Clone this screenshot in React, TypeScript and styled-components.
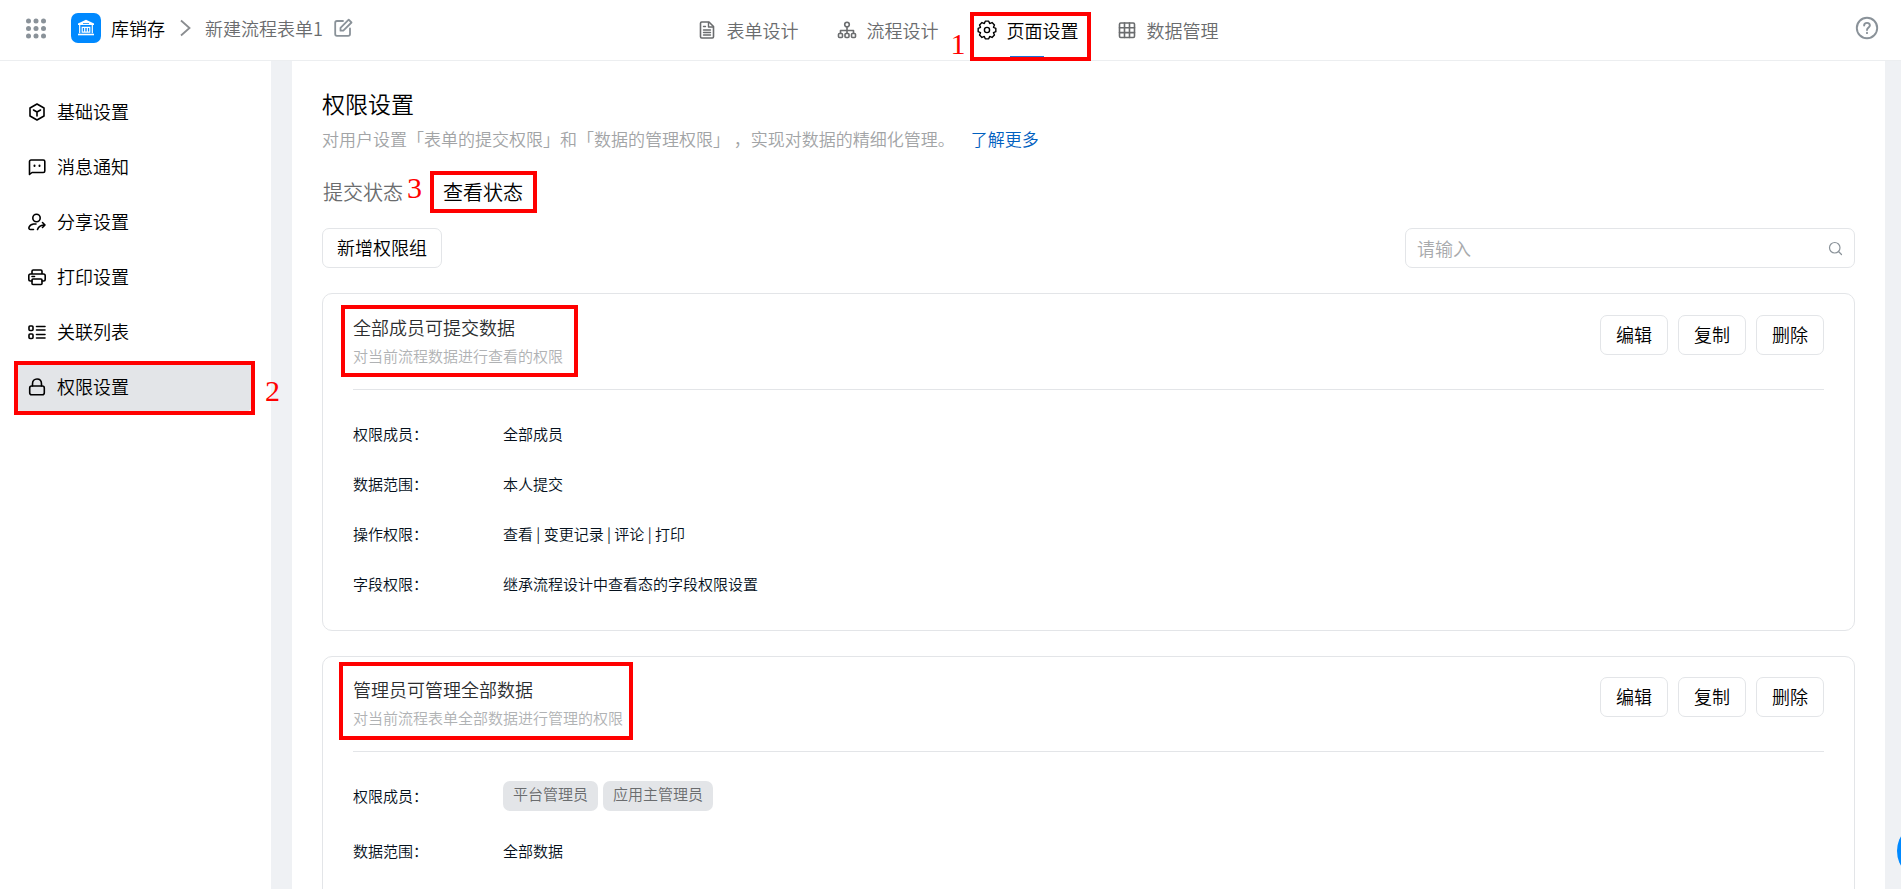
import React from "react";
import styled, { createGlobalStyle } from "styled-components";

const GlobalStyle = createGlobalStyle`
  *, *::before, *::after { box-sizing: border-box; }
  body {
    margin: 0;
    color: #000;
    background: #eff1f4;
    font-family: "Noto Sans CJK SC", "Liberation Sans", sans-serif;
    font-size: 18px;
    font-weight: 350;
    line-height: 24px;
    overflow: hidden;
  }
  button, input { font: inherit; color: inherit; }
  h1, h2, p, dl, dd, dt, ul { margin: 0; padding: 0; font-weight: inherit; }
`;

const Page = styled.div`
  display: flex;
  flex-direction: column;
  height: 100vh;
`;

const Header = styled.header`
  display: flex;
  align-items: center;
  flex: none;
  height: 61px;
  padding: 0 12px 0 26px;
  background: #fff;
  border-bottom: 1px solid #eceef0;
`;

const HeaderSide = styled.div<{ $end?: boolean }>`
  display: flex;
  flex: 1;
  align-items: center;
  justify-content: ${(p) => (p.$end ? "flex-end" : "flex-start")};
  padding-right: ${(p) => (p.$end ? "10px" : "18px")};
  padding-bottom: 4px;
`;

const IconButton = styled.button`
  display: flex;
  padding: 0;
  border: 0;
  background: none;
  color: #8a9299;
  cursor: pointer;
`;

const AppLogo = styled.span`
  display: flex;
  align-items: center;
  justify-content: center;
  width: 30px;
  height: 30px;
  margin: 0 10px 0 25px;
  border-radius: 7px;
  background: #0089ff;
`;

const CrumbArrow = styled.svg`
  margin: 0 14px;
`;

const FormName = styled.span`
  margin-right: 10px;
  color: #6a6c6e;
`;

const Nav = styled.nav`
  display: flex;
  height: 60px;
`;

const NavTab = styled.a<{ $active?: boolean }>`
  position: relative;
  display: flex;
  align-items: center;
  gap: 10px;
  width: 140px;
  padding: 0 0 0 15px;
  color: ${(p) => (p.$active ? "#000" : "#6a6c6e")};
  text-decoration: none;
`;

const NavLine = styled.span`
  position: absolute;
  left: 48px;
  bottom: 2px;
  width: 34px;
  height: 2px;
  background: #1a73d8;
`;

const Body = styled.div`
  display: flex;
  flex: 1;
  gap: 21px;
  min-height: 0;
  padding-right: 16px;
`;

const Sidebar = styled.nav`
  display: flex;
  flex: none;
  flex-direction: column;
  gap: 5px;
  width: 271px;
  padding: 26px 19px 0 16px;
  background: #fff;
`;

const SideItem = styled.a<{ $active?: boolean }>`
  position: relative;
  display: flex;
  align-items: center;
  gap: 10px;
  height: 50px;
  padding-left: 11px;
  border-radius: 7px;
  background: ${(p) => (p.$active ? "#e3e5e8" : "transparent")};
  color: inherit;
  text-decoration: none;
`;

const SideLabel = styled.span`
  padding-bottom: 2px;
`;

const Main = styled.main`
  flex: 1;
  min-width: 0;
  padding: 26px 30px 0;
  overflow: hidden;
  background: #fff;
`;

const Title = styled.h1`
  font-size: 23px;
  line-height: 32px;
`;

const Intro = styled.p`
  margin-top: 8px;
  color: #a2a4a6;
  font-size: 17px;
`;

const MoreLink = styled.a`
  margin-left: 16px;
  color: #0060c0;
  text-decoration: none;
`;

const Tabs = styled.div`
  display: flex;
  gap: 40px;
  margin-top: 27px;
  padding-left: 1px;
`;

const Tab = styled.button<{ $active?: boolean }>`
  position: relative;
  padding: 0;
  border: 0;
  background: none;
  color: ${(p) => (p.$active ? "#000" : "#6a6c6e")};
  font-size: 20px;
  line-height: 28px;
  cursor: pointer;
`;

const Toolbar = styled.div`
  display: flex;
  justify-content: space-between;
  margin-top: 22px;
`;

const Button = styled.button`
  min-width: 68px;
  height: 40px;
  padding: 0 14px 2px;
  border: 1px solid #e3e5e8;
  border-radius: 7px;
  background: #fff;
  cursor: pointer;
`;

const SearchBox = styled.label`
  display: flex;
  align-items: center;
  width: 450px;
  height: 40px;
  padding: 0 11px;
  border: 1px solid #e3e5e8;
  border-radius: 7px;
`;

const SearchInput = styled.input`
  flex: 1;
  min-width: 0;
  padding: 0;
  border: 0;
  outline: 0;
  background: none;
  &::placeholder { color: #a8aaac; opacity: 1; }
`;

const Card = styled.section<{ $open?: boolean }>`
  margin-top: 25px;
  padding: 0 30px ${(p) => (p.$open ? "120px" : "21px")};
  border: 1px solid #e3e5e8;
  border-radius: 10px;
`;

const CardHead = styled.div<{ $open?: boolean }>`
  display: flex;
  align-items: flex-start;
  justify-content: space-between;
  height: ${(p) => (p.$open ? "95px" : "96px")};
  padding-top: ${(p) => (p.$open ? "20px" : "21px")};
  border-bottom: 1px solid #e3e5e8;
`;

const CardHeading = styled.div`
  position: relative;
`;

const CardTitle = styled.h2`
  color: #2c2e30;
  font-size: 18px;
`;

const CardNote = styled.p`
  margin-top: 6px;
  color: #b0b2b4;
  font-size: 15px;
  line-height: 22px;
`;

const Actions = styled.div`
  display: flex;
  gap: 10px;
`;

const Details = styled.dl<{ $open?: boolean }>`
  padding-top: ${(p) => (p.$open ? "16px" : "19px")};
  font-size: 15px;
  color: #04101c;
`;

const DetailRow = styled.div<{ $tall?: boolean }>`
  display: flex;
  align-items: center;
  height: ${(p) => (p.$tall ? "55px" : "50px")};
`;

const DetailLabel = styled.dt`
  width: 150px;
`;

const DetailValue = styled.dd`
  display: flex;
  gap: 5px;
`;

const Tag = styled.span`
  height: 30px;
  padding: 0 10px;
  border-radius: 7px;
  background: #e3e5e8;
  color: #6a6c6e;
  line-height: 26px;
`;

const Mark = styled.span<{ $inset: string }>`
  position: absolute;
  inset: ${(p) => p.$inset};
  border: 4px solid #ff0000;
  pointer-events: none;
`;

const Step = styled.span<{ $left: number; $top: number }>`
  position: absolute;
  left: ${(p) => p.$left}px;
  top: ${(p) => p.$top}px;
  color: #ff0000;
  font-family: "Liberation Serif", serif;
  font-size: 30px;
  font-weight: 400;
  line-height: 30px;
`;

const FloatButton = styled.button`
  position: fixed;
  right: -56px;
  bottom: 8px;
  width: 60px;
  height: 60px;
  padding: 0;
  border: 0;
  border-radius: 50%;
  background: #0089ff;
`;

type IconProps = { children: React.ReactNode; size?: number; width?: number };

const Icon = ({ children, size = 20, width = 1.6 }: IconProps) => (
  <svg
    width={size}
    height={size}
    viewBox="0 0 20 20"
    fill="none"
    stroke="currentColor"
    strokeWidth={width}
    strokeLinejoin="round"
    strokeLinecap="round"
    aria-hidden="true"
  >
    {children}
  </svg>
);

// Eight broad teeth: each tooth has two outer points and one notch point.
const gearPoints = Array.from({ length: 8 }, (_, i) =>
  [
    [-11, 9],
    [11, 9],
    [22.5, 7],
  ]
    .map(([offset, r]) => {
      const angle = ((i * 45 + offset) * Math.PI) / 180;
      return `${(10 + r * Math.cos(angle)).toFixed(2)},${(10 + r * Math.sin(angle)).toFixed(2)}`;
    })
    .join(" "),
).join(" ");

const navTabs = [
  {
    label: "表单设计",
    icon: (
      <>
        <path d="M3.500 3.200C3.500 2.500 4 2 4.700 2H12L16.500 6.500V16.800C16.500 17.500 16 18 15.300 18H4.700C4 18 3.500 17.500 3.500 16.800Z" />
        <path d="M11.500 2.500V7H16M6.500 6.500H8.500M6.500 10H13.500M6.500 12.500H13.500M6.500 15H13.500" strokeWidth="1.400" />
      </>
    ),
  },
  {
    label: "流程设计",
    icon: (
      <>
        <circle cx="10" cy="4.500" r="2.300" />
        <path d="M10 7V13M3.500 13V10.500H16.500V13" />
        <rect x="1.500" y="13.500" width="4" height="4" rx="1" />
        <rect x="8" y="13.500" width="4" height="4" rx="1" />
        <rect x="14.500" y="13.500" width="4" height="4" rx="1" />
      </>
    ),
  },
  {
    label: "页面设置",
    active: true,
    icon: (
      <>
        <polygon points={gearPoints} strokeWidth="1.400" />
        <circle cx="10" cy="10" r="2.600" strokeWidth="1.400" />
      </>
    ),
  },
  {
    label: "数据管理",
    icon: (
      <>
        <rect x="2.500" y="3" width="15" height="14.500" rx="1.200" />
        <path d="M7.500 3V17.500M12.500 3V17.500M2.500 7.800H17.500M2.500 12.600H17.500" />
      </>
    ),
  },
];

const sideItems = [
  {
    label: "基础设置",
    icon: (
      <>
        <path d="M10 2L17 6V14L10 18L3 14V6Z" />
        <path d="M6.500 8L10 10L13.500 8M10 10V14" />
      </>
    ),
  },
  {
    label: "消息通知",
    icon: (
      <>
        <path d="M2.500 17.500V4.500C2.500 3.700 3.200 3 4 3H16.300C17.100 3 17.800 3.700 17.800 4.500V14C17.800 14.800 17.100 15.500 16.300 15.500H5Z" />
        <path d="M7.500 8.500V9M12.500 8.500V9" strokeWidth="2" />
      </>
    ),
  },
  {
    label: "分享设置",
    icon: (
      <>
        <circle cx="9.500" cy="6" r="3.700" />
        <path d="M6.500 17.500H3.500C2.200 17.500 1.600 16.500 2 15.300C2.600 13.500 4 12.500 6.500 12H9M10.500 17.500C11.500 14.500 13.500 13 18 13M15.500 10.500L18 13L15.500 15.500" />
      </>
    ),
  },
  {
    label: "打印设置",
    icon: (
      <>
        <path d="M5 7V4.200C5 3.500 5.500 3 6.200 3H13.800C14.500 3 15 3.500 15 4.200V7M5 14H3.500C2.500 14 1.800 13.300 1.800 12.300V8.700C1.800 7.700 2.500 7 3.500 7H16.500C17.500 7 18.200 7.700 18.200 8.700V12.300C18.200 13.300 17.500 14 16.500 14H15" />
        <rect x="5" y="12" width="10" height="5.500" rx="1" />
        <path d="M5 9.500H7.500" />
      </>
    ),
  },
  {
    label: "关联列表",
    icon: (
      <>
        <rect x="2" y="4" width="4" height="4.500" rx="1" />
        <rect x="2" y="12" width="4" height="4.500" rx="1" />
        <path d="M9.500 4.500H18M9.500 8H18M9.500 12.500H18M9.500 16H18" />
      </>
    ),
  },
  {
    label: "权限设置",
    active: true,
    icon: (
      <>
        <rect x="2.700" y="9" width="14.600" height="8.800" rx="2" />
        <path d="M5.500 9V7C5.500 4 7.300 2 10 2S14.500 4 14.500 7V9" />
      </>
    ),
  },
];

type Group = {
  title: string;
  note: string;
  mark: string;
  open?: boolean;
  rows: { label: string; value?: string; tags?: string[] }[];
};

const groups: Group[] = [
  {
    title: "全部成员可提交数据",
    note: "对当前流程数据进行查看的权限",
    mark: "-10px -15px -10px -12px",
    rows: [
      { label: "权限成员：", value: "全部成员" },
      { label: "数据范围：", value: "本人提交" },
      { label: "操作权限：", value: "查看 | 变更记录 | 评论 | 打印" },
      { label: "字段权限：", value: "继承流程设计中查看态的字段权限设置" },
    ],
  },
  {
    title: "管理员可管理全部数据",
    note: "对当前流程表单全部数据进行管理的权限",
    mark: "-15px -10px -11px -14px",
    open: true,
    rows: [
      { label: "权限成员：", tags: ["平台管理员", "应用主管理员"] },
      { label: "数据范围：", value: "全部数据" },
    ],
  },
];

const GroupCard = ({ group }: { group: Group }) => (
  <Card $open={group.open}>
    <CardHead $open={group.open}>
      <CardHeading>
        <CardTitle>{group.title}</CardTitle>
        <CardNote>{group.note}</CardNote>
        <Mark $inset={group.mark} />
      </CardHeading>
      <Actions>
        <Button>编辑</Button>
        <Button>复制</Button>
        <Button>删除</Button>
      </Actions>
    </CardHead>
    <Details $open={group.open}>
      {group.rows.map((row) => (
        <DetailRow key={row.label} $tall={group.open}>
          <DetailLabel>{row.label}</DetailLabel>
          <DetailValue>
            {row.tags ? row.tags.map((tag) => <Tag key={tag}>{tag}</Tag>) : row.value}
          </DetailValue>
        </DetailRow>
      ))}
    </Details>
  </Card>
);

export default function App() {
  return (
    <Page>
      <GlobalStyle />
      <Header>
        <HeaderSide>
          <IconButton aria-label="应用列表">
            <svg width="20" height="21" viewBox="0 0 20 21" fill="currentColor">
              {[3, 10.5, 18].map((y) =>
                [2.5, 10, 17.5].map((x) => <circle key={`${x}-${y}`} cx={x} cy={y} r="2.500" />),
              )}
            </svg>
          </IconButton>
          <AppLogo>
            <svg width="18" height="18" viewBox="0 0 18 18" fill="none" stroke="#fff">
              <path d="M9 .8L17 4.600V6H1V4.600Z" fill="#fff" stroke="none" />
              <path d="M6 4.500H12" stroke="#0089ff" strokeWidth=".8" />
              <path d="M2.700 6V14.300M15.300 6V14.300M5.200 8.300H12.800V13.200H5.200ZM7.700 8.300V13.200M10.300 8.300V13.200" strokeWidth="1.200" />
              <path d="M1 15.500H17" strokeWidth="1.600" />
            </svg>
          </AppLogo>
          <span>库销存</span>
          <CrumbArrow width="12" height="18" viewBox="0 0 12 18" fill="none" stroke="#8a8d90" strokeWidth="1.800">
            <path d="M2 1.500L10.500 9L2 16.500" />
          </CrumbArrow>
          <FormName>新建流程表单1</FormName>
          <IconButton aria-label="重命名">
            <Icon width={1.8}>
              <path d="M10 3H4C2.900 3 2.200 3.700 2.200 4.800V16C2.200 17.100 2.900 17.800 4 17.800H15.200C16.300 17.800 17 17.100 17 16V10.500" />
              <path d="M7.500 12.700V9.800L15.700 1.700L18.500 4.500L10.300 12.700Z" />
            </Icon>
          </IconButton>
        </HeaderSide>
        <Nav>
          {navTabs.map((tab) => (
            <NavTab key={tab.label} href="#" $active={tab.active}>
              <Icon>{tab.icon}</Icon>
              {tab.label}
              {tab.active && (
                <>
                  <NavLine />
                  <Mark $inset="12px 11px -1px 8px" />
                  <Step $left={-11} $top={29}>1</Step>
                </>
              )}
            </NavTab>
          ))}
        </Nav>
        <HeaderSide $end>
          <IconButton aria-label="帮助">
            <Icon size={24}>
              <circle cx="10" cy="10" r="8.500" />
              <path d="M7.600 8C7.600 6.500 8.600 5.700 10 5.700S12.400 6.500 12.400 7.900C12.400 9.500 10 9.700 10 11.700M10 14V14.300" />
            </Icon>
          </IconButton>
        </HeaderSide>
      </Header>
      <Body>
        <Sidebar>
          {sideItems.map((item) => (
            <SideItem key={item.label} href="#" $active={item.active}>
              <Icon>{item.icon}</Icon>
              <SideLabel>{item.label}</SideLabel>
              {item.active && (
                <>
                  <Mark $inset="-1px -3px -3px -2px" />
                  <Step $left={249} $top={14}>2</Step>
                </>
              )}
            </SideItem>
          ))}
        </Sidebar>
        <Main>
          <Title>权限设置</Title>
          <Intro>
            对用户设置「表单的提交权限」和「数据的管理权限」 ，实现对数据的精细化管理。
            <MoreLink href="#">了解更多</MoreLink>
          </Intro>
          <Tabs>
            <Tab>提交状态</Tab>
            <Tab $active>
              查看状态
              <Mark $inset="-7px -14px -7px -13px" />
              <Step $left={-36} $top={-5}>3</Step>
            </Tab>
          </Tabs>
          <Toolbar>
            <Button>新增权限组</Button>
            <SearchBox>
              <SearchInput placeholder="请输入" aria-label="搜索权限组" />
              <Icon size={15}>
                <circle cx="9" cy="9" r="7" stroke="#8a9299" />
                <path d="M14 14L18 18" stroke="#8a9299" />
              </Icon>
            </SearchBox>
          </Toolbar>
          {groups.map((group) => (
            <GroupCard key={group.title} group={group} />
          ))}
        </Main>
      </Body>
      <FloatButton aria-label="客服" />
    </Page>
  );
}
